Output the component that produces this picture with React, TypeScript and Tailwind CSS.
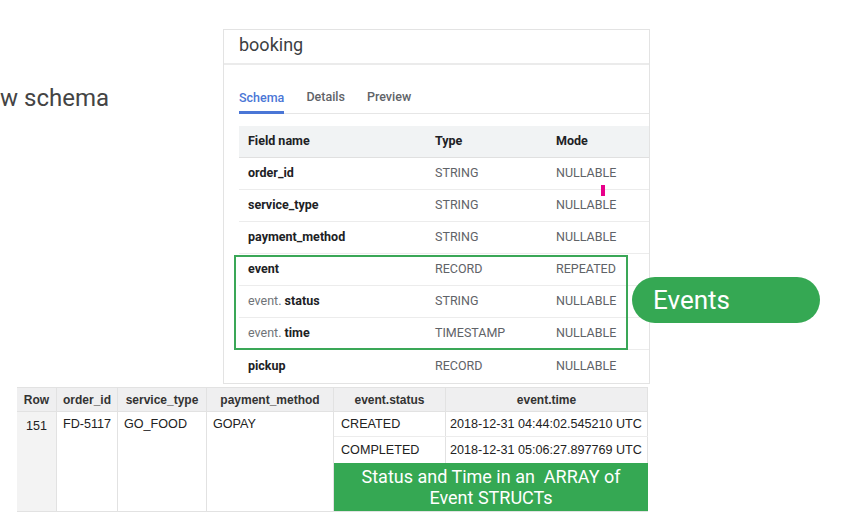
const SCHEMA = [
  { name: "order_id", type: "STRING", mode: "NULLABLE" },
  { name: "service_type", type: "STRING", mode: "NULLABLE" },
  { name: "payment_method", type: "STRING", mode: "NULLABLE" },
  { name: "event", type: "RECORD", mode: "REPEATED" },
  { prefix: "event.", name: "status", type: "STRING", mode: "NULLABLE" },
  { prefix: "event.", name: "time", type: "TIMESTAMP", mode: "NULLABLE" },
  { name: "pickup", type: "RECORD", mode: "NULLABLE" },
];

const HEADERS = ["Row", "order_id", "service_type", "payment_method", "event.status", "event.time"];

function SchemaCard() {
  return (
    <div className="relative w-[427px] h-[355px] shrink-0 border border-[#e3e3e3] bg-white font-['Roboto',sans-serif]">
      {/* title */}
      <div className="h-[35px] border-b-2 border-[#ebebeb] pl-[15px] pt-[3px] text-[18px] leading-[24px] text-[#3c4043]">
        booking
      </div>

      {/* tabs */}
      <div className="ml-[15px] flex h-[49px] items-end border-b border-[#e6e6e6] text-[12.5px] font-medium">
        <div className="-mb-px flex h-[25px] items-start border-b-[3px] border-[#4a76d6] text-[#4a76d6]">Schema</div>
        <div className="ml-[22px] h-[25px] text-[#5f6368]">Details</div>
        <div className="ml-[22px] h-[25px] text-[#5f6368]">Preview</div>
      </div>

      {/* field table */}
      <div className="ml-[15px] mt-[12px] text-[12.5px]">
        <div className="grid h-[32px] grid-cols-[187px_121px_1fr] items-center border-b border-[#e0e0e0] bg-[#f1f3f4] pl-[9px] font-bold text-[#202124]">
          <span>Field name</span>
          <span>Type</span>
          <span>Mode</span>
        </div>
        {SCHEMA.map((f) => (
          <div
            key={(f.prefix ?? "") + f.name}
            className="grid h-[32px] grid-cols-[187px_121px_1fr] items-center border-b border-[#ececec] pl-[9px] last:border-b-0"
          >
            <span className="font-bold text-[#202124]">
              {f.prefix && <span className="font-normal text-[#6f7377]">{f.prefix} </span>}
              {f.name}
            </span>
            <span className="text-[#5f6368]">{f.type}</span>
            <span className="text-[#5f6368]">{f.mode}</span>
          </div>
        ))}
      </div>

      {/* highlight around the event record */}
      <div className="absolute left-[10px] top-[225px] h-[95px] w-[394px] border-2 border-[#3aa757]" />
    </div>
  );
}

export default function App() {
  const cell = "border-r border-[#e2e2e2] whitespace-nowrap";
  return (
    <div className="relative h-[514px] w-[861px] overflow-hidden bg-white">
      <div className="flex pt-[29px]">
        <div className="w-[223px] shrink-0 pt-[55px] font-['Roboto',sans-serif] text-[24px] leading-[28px] text-[#444]">
          w schema
        </div>
        <SchemaCard />
      </div>

      {/* callout pill */}
      <div className="absolute left-[632px] top-[277px] flex h-[46px] w-[188px] items-center rounded-full bg-[#35a853] pl-[21px] font-['Roboto',sans-serif] text-[26px] text-white">
        Events
      </div>

      {/* cursor mark */}
      <div className="absolute left-[601px] top-[185px] h-[11px] w-[4px] bg-[#e8008a]" />

      {/* query result */}
      <div className="ml-[17px] mt-[3px] w-[631px] font-['Liberation_Sans',Arial,sans-serif] text-[12.6px] text-[#222]">
        <div className="grid h-[25px] grid-cols-[40px_61px_89px_127px_112px_202px] items-center border-y border-[#e2e2e2] bg-[#efeff0] text-center text-[12px] font-bold text-[#333]">
          {HEADERS.map((h) => (
            <div key={h} className="flex h-full items-center justify-center border-r border-[#e2e2e2]">
              {h}
            </div>
          ))}
        </div>
        <div className="grid grid-cols-[40px_61px_89px_127px_314px]">
          <div className="border-r border-[#e2e2e2] bg-[#f3f3f3] pt-[5px] text-center">151</div>
          <div className={`${cell} bg-white px-[6px]`}>
            <div className="flex h-[25px] items-center">FD-5117</div>
          </div>
          <div className={`${cell} bg-white px-[6px]`}>
            <div className="flex h-[25px] items-center">GO_FOOD</div>
          </div>
          <div className={`${cell} bg-white px-[6px]`}>
            <div className="flex h-[25px] items-center">GOPAY</div>
          </div>
          <div className="flex flex-col">
            <div className="grid h-[25px] grid-cols-[112px_202px] border-b border-[#ececec]">
              <div className={`${cell} flex items-center px-[7px]`}>CREATED</div>
              <div className={`${cell} flex items-center px-[4px]`}>2018-12-31 04:44:02.545210 UTC</div>
            </div>
            <div className="grid h-[26px] grid-cols-[112px_202px]">
              <div className={`${cell} flex items-center px-[7px]`}>COMPLETED</div>
              <div className={`${cell} flex items-center px-[4px]`}>2018-12-31 05:06:27.897769 UTC</div>
            </div>
            <div className="flex h-[48px] flex-col items-center justify-center bg-[#35a853] font-['Roboto',sans-serif] text-[18px] leading-[21px] text-white">
              <span>Status and Time in an &nbsp;ARRAY of</span>
              <span>Event STRUCTs</span>
            </div>
          </div>
        </div>
        <div className="h-[10px] border-t border-[#e2e2e2]" />
      </div>
    </div>
  );
}
